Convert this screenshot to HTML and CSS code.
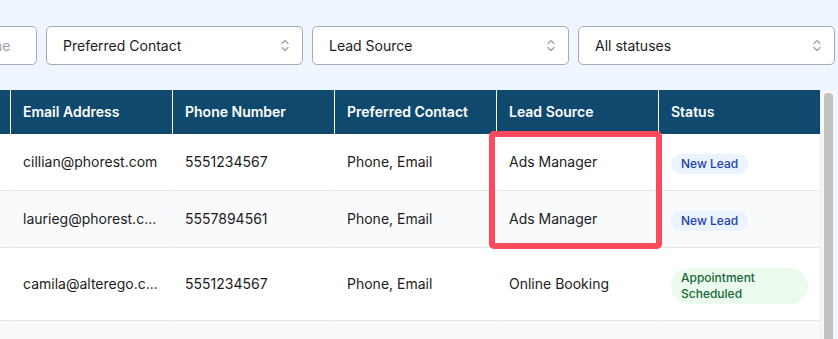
FILE: index.html
```html
<!DOCTYPE html>
<html lang="en">
<head>
  <meta charset="UTF-8" />
  <title>Leads</title>
  <link rel="stylesheet" href="styles.css">
</head>
<body>
  <div class="page">

    <!-- filters -->
    <div class="filters">
      <input class="search" placeholder="Search by name, email or phone" />
      <div class="select">
        <span>Preferred Contact</span>
        <svg class="chev" width="8" height="15" viewBox="0 0 8 15"><path d="M1 5.5 L4 2.5 L7 5.5 M1 9.5 L4 12.5 L7 9.5" /></svg>
      </div>
      <div class="select">
        <span>Lead Source</span>
        <svg class="chev" width="8" height="15" viewBox="0 0 8 15"><path d="M1 5.5 L4 2.5 L7 5.5 M1 9.5 L4 12.5 L7 9.5" /></svg>
      </div>
      <div class="select">
        <span>All statuses</span>
        <svg class="chev" width="8" height="15" viewBox="0 0 8 15"><path d="M1 5.5 L4 2.5 L7 5.5 M1 9.5 L4 12.5 L7 9.5" /></svg>
      </div>
    </div>

    <!-- leads table -->
    <div class="table-area">
      <div class="viewport">
        <table class="leads">
          <thead>
            <tr>
              <th>Full Name</th>
              <th>Email Address</th>
              <th>Phone Number</th>
              <th>Preferred Contact</th>
              <th>Lead Source</th>
              <th>Status</th>
            </tr>
          </thead>
          <tbody>
            <tr>
              <td>Cillian Murphy</td>
              <td>cillian@phorest.com</td>
              <td>5551234567</td>
              <td>Phone, Email</td>
              <td>Ads Manager</td>
              <td><span class="badge new">New Lead</span></td>
            </tr>
            <tr>
              <td>Laurie Green</td>
              <td>laurieg@phorest.c...</td>
              <td>5557894561</td>
              <td>Phone, Email</td>
              <td>Ads Manager</td>
              <td><span class="badge new">New Lead</span></td>
            </tr>
            <tr>
              <td>Camila Reyes</td>
              <td>camila@alterego.c...</td>
              <td>5551234567</td>
              <td>Phone, Email</td>
              <td>Online Booking</td>
              <td><span class="badge booked">Appointment Scheduled</span></td>
            </tr>
            <tr>
              <td>Sean Walsh</td>
              <td>sean@phorest.com</td>
              <td>5559876543</td>
              <td>Email</td>
              <td>Walk In</td>
              <td><span class="badge new">New Lead</span></td>
            </tr>
          </tbody>
        </table>
        <div class="highlight"></div>
      </div>
      <div class="scrollbar"><div class="thumb"></div></div>
    </div>

  </div>
</body>
</html>
```

FILE: styles.css
```css
body {
  margin: 0;
  background: #eff6ff;
  font-family: Inter, "Noto Sans", sans-serif;
  font-size: 14px;
  color: #1c1c1c;
  overflow: hidden;
}

.page {
  padding: 26px 3px 0 0;
}

/* filter bar */
.filters {
  display: flex;
  justify-content: flex-end;
  gap: 9px;
  overflow: hidden;
}

.search,
.select {
  flex: 0 0 257px;
  box-sizing: border-box;
  height: 39px;
  border: 1px solid #a3abb8;
  border-radius: 5px;
  background: #fff;
  font-family: inherit;
  font-size: 14px;
  color: #1c1c1c;
}

.search {
  padding: 0 16px;
  outline: none;
}

.search::placeholder {
  color: #9ca3af;
}

.select {
  display: flex;
  align-items: center;
  justify-content: space-between;
  padding: 0 13px 0 16px;
}

.chev path {
  fill: none;
  stroke: #9ca3af;
  stroke-width: 1.3;
  stroke-linecap: round;
  stroke-linejoin: round;
}

/* table */
.table-area {
  display: flex;
  margin-top: 25px;
}

.viewport {
  position: relative;
  flex: 1;
  display: flex;
  align-items: flex-start;
  justify-content: flex-end;
  overflow: hidden;
}

table.leads {
  flex: 0 0 972px;
  width: 972px;
  table-layout: fixed;
  border-collapse: separate;
  border-spacing: 0;
}

.leads th,
.leads td {
  box-sizing: border-box;
  width: 162px;
  text-align: left;
  padding: 0 12px;
  white-space: nowrap;
  overflow: hidden;
}

.leads th {
  height: 44px;
  background: #0f4a6e;
  color: #fff;
  font-weight: 600;
  line-height: 20px;
  border-left: 1px solid #fff;
}

.leads th:first-child {
  border-left: none;
}

.leads td {
  padding-top: 18px;
  padding-bottom: 18px;
  line-height: 20px;
  vertical-align: middle;
  border-left: 1px solid transparent;
  border-bottom: 1px solid #e5e7eb;
  background: #fff;
}

.leads td:first-child {
  border-left: none;
}

.leads tbody tr:nth-child(even) td {
  background: #f8fafc;
}

.leads td:last-child {
  white-space: normal;
  padding-top: 20px;
  padding-bottom: 16px;
}

.badge {
  display: inline-block;
  padding: 2px 10px;
  border-radius: 999px;
  font-size: 12px;
  font-weight: 500;
  line-height: 16px;
  vertical-align: top;
}

.badge.new {
  background: #ebf3fe;
  color: #1e3fa8;
}

.badge.booked {
  background: #ebfcef;
  color: #186534;
}

/* red box round the lead source column */
.highlight {
  position: absolute;
  left: 489px;
  top: 41px;
  width: 173px;
  height: 118px;
  box-sizing: border-box;
  border: 6px solid #fb4a5b;
  border-radius: 5px;
}

/* fake scrollbar */
.scrollbar {
  flex: 0 0 15px;
  box-sizing: border-box;
  background: #f7f7f7;
  border-left: 1px solid #ececec;
  padding: 3px 2px 0 3px;
}

.thumb {
  height: 400px;
  background: #c1c1c1;
  border-radius: 4px 4px 0 0;
}
```
